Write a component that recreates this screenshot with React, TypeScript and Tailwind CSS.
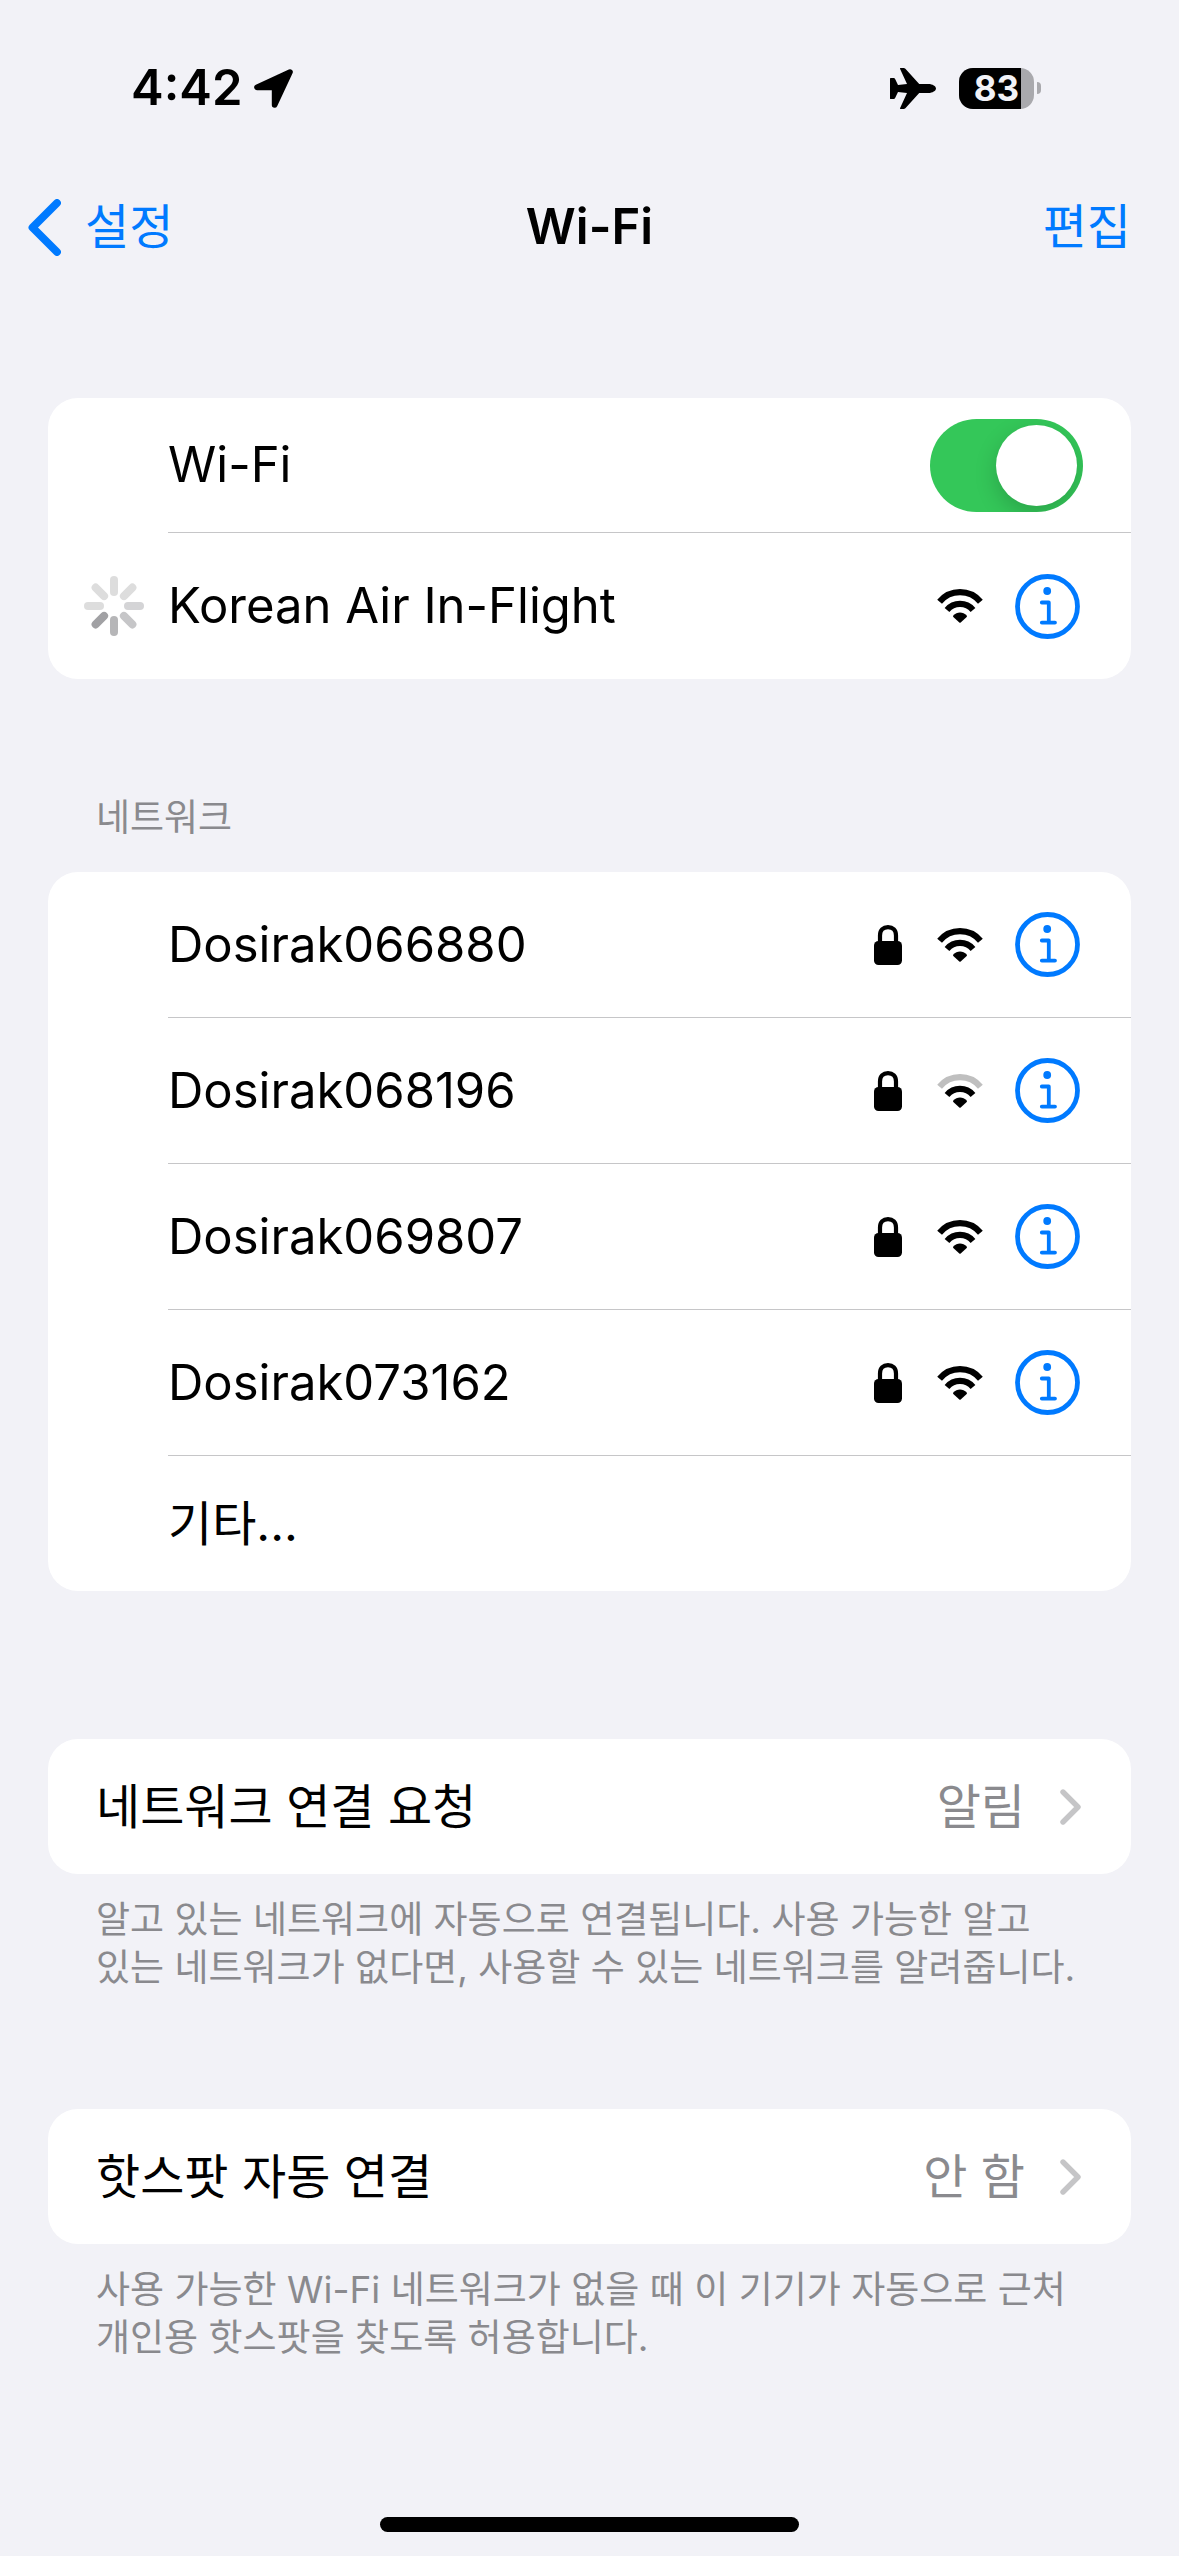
import { useState } from "react"
import clsx from "clsx"

type Network = {
  name: string
  locked?: boolean
  weak?: boolean
  connecting?: boolean
}

const CURRENT: Network = { name: "Korean Air In-Flight", connecting: true }

const NETWORKS: Network[] = [
  { name: "Dosirak066880", locked: true },
  { name: "Dosirak068196", locked: true, weak: true },
  { name: "Dosirak069807", locked: true },
  { name: "Dosirak073162", locked: true },
]

// Clockwise from the top
const SPINNER_COLORS = ["#dddddd", "#dddddd", "#d4d4d6", "#c6c6c8", "#b6b6b8", "#a1a1a4", "#dddddd", "#dddddd"]

function LocationIcon() {
  return (
    <svg width="39" height="39" viewBox="0 0 39 39" aria-hidden="true">
      <path d="M36 3 3 18.4h17.6V36z" fill="#000" stroke="#000" strokeWidth="5.6" strokeLinejoin="round" />
    </svg>
  )
}

function AirplaneIcon() {
  return (
    <svg width="46" height="41" viewBox="0 0 46 41" aria-hidden="true">
      <path d="M0 10.6Q0 10 .8 10H3.8Q4.6 10 5 10.7L8 17.1 17 16.1 10 .8Q9.7 0 10.6 0H13.6Q14.6 0 15.4.8L29.2 16H38.5C42.5 16 46 18.2 46 20.5S42.5 25 38.5 25H29.2L15.4 40.2Q14.6 41 13.6 41H10.6Q9.7 41 10 40.2L17 24.9 8 23.9 5 30.3Q4.6 31 3.8 31H.8Q0 31 0 30.4z" />
    </svg>
  )
}

function BatteryIcon() {
  return (
    <div className="flex items-center gap-[3px]" role="img" aria-label="83%">
      <div className="flex h-[41px] w-[75px] items-center overflow-hidden rounded-[14px] bg-[#a9a9ad]">
        <div className="flex h-full w-[62px] items-center justify-end bg-black pr-[2px] text-[35px] leading-none font-bold text-[#f2f2f7]">
          83
        </div>
      </div>
      <div className="h-3 w-1 rounded-r-full bg-[#a9a9ad]" />
    </div>
  )
}

function WifiIcon({ weak }: { weak?: boolean }) {
  return (
    <svg width="46" height="34" viewBox="0 0 46 34" fill="none" aria-hidden="true">
      <path d="M2.6 12.8A26.5 26.5 0 0 1 43.4 12.8" stroke={weak ? "#bfbfbf" : "#000"} strokeWidth="6.2" />
      <path d="M10 20.9A17 17 0 0 1 36 20.9" stroke="#000" strokeWidth="6.2" />
      <path d="M16.3 26.6C20 22.3 26 22.3 29.7 26.6Q30.3 27.3 29.7 27.9L23.7 33.4Q23 34 22.3 33.4L16.3 27.9Q15.7 27.3 16.3 26.6z" fill="#000" />
    </svg>
  )
}

function LockIcon() {
  return (
    <svg width="28" height="40" viewBox="0 0 28 40" aria-hidden="true">
      <path d="M6 18V10.5C6 5 9.2 2.2 14 2.2S22 5 22 10.5V18" fill="none" stroke="#000" strokeWidth="4.2" />
      <rect y="16" width="28" height="24" rx="4.5" />
    </svg>
  )
}

function InfoIcon() {
  return (
    <svg width="65" height="65" viewBox="0 0 65 65" fill="none" stroke="#007aff" aria-hidden="true">
      <circle cx="32.5" cy="32.5" r="30" strokeWidth="4.8" />
      <circle cx="32.2" cy="17" r="3.9" fill="#007aff" stroke="none" />
      <path d="M26.8 28.5H33.8V48.6M26.8 48.6H40" strokeWidth="3.8" strokeLinecap="round" strokeLinejoin="round" />
    </svg>
  )
}

function Spinner() {
  return (
    <svg width="60" height="60" viewBox="0 0 60 60" aria-hidden="true">
      {SPINNER_COLORS.map((color, i) => (
        <rect key={i} x="26" y="0" width="8" height="20" rx="4" fill={color} transform={`rotate(${i * 45} 30 30)`} />
      ))}
    </svg>
  )
}

function NetworkRow({ network, divider }: { network: Network; divider?: boolean }) {
  return (
    <div className="flex items-center">
      <div className="flex w-30 shrink-0 justify-center pl-3">{network.connecting && <Spinner />}</div>
      <div className={clsx("flex h-[146px] flex-1 items-center pr-[51px]", divider && "border-b border-[#c6c6c8]")}>
        <span className="flex-1 text-[49px]">{network.name}</span>
        {network.locked && <LockIcon />}
        <span className="mr-8 ml-[35px]">
          <WifiIcon weak={network.weak} />
        </span>
        <button type="button" aria-label={`${network.name} 정보`}>
          <InfoIcon />
        </button>
      </div>
    </div>
  )
}

function LinkCard({ label, value, note }: { label: string; value: string; note: string }) {
  return (
    <section>
      <a href="#" className="flex h-[135px] items-center rounded-[30px] bg-white pr-[50px] pl-12 text-[48px]">
        <span className="flex-1">{label}</span>
        <span className="text-[#8a8a8e]">{value}</span>
        <svg className="ml-[35px]" width="21" height="36" viewBox="0 0 21 36" fill="none" aria-hidden="true">
          <path d="M3 3 18 18 3 33" stroke="#c5c5c7" strokeWidth="5.4" strokeLinecap="round" strokeLinejoin="round" />
        </svg>
      </a>
      <p className="mt-[22px] px-12 text-[37px] leading-[48px] break-keep text-[#8a8a8e]">{note}</p>
    </section>
  )
}

export default function App() {
  const [wifiOn, setWifiOn] = useState(true)

  return (
    <div className="flex min-h-screen flex-col bg-[#f2f2f7] font-[Inter,'Noto_Sans_CJK_KR',sans-serif] leading-tight text-black">
      {/* Status bar */}
      <div className="flex h-44 items-center justify-between pr-[138px] pl-[131px]">
        <div className="flex items-center gap-3">
          <span className="text-[49px] font-semibold">4:42</span>
          <LocationIcon />
        </div>
        <div className="flex items-center gap-[23px]">
          <AirplaneIcon />
          <BatteryIcon />
        </div>
      </div>

      {/* Navigation */}
      <header className="grid h-[102px] grid-cols-3 items-center px-7 text-[48px]">
        <a href="#" className="flex items-center gap-6 text-[#007aff]">
          <svg width="33" height="57" viewBox="0 0 33 57" fill="none" aria-hidden="true">
            <path d="M29 4 4.5 28.5 29 53" stroke="#007aff" strokeWidth="7.8" strokeLinecap="round" strokeLinejoin="round" />
          </svg>
          설정
        </a>
        <h1 className="text-center text-[49px] font-semibold">Wi-Fi</h1>
        <button type="button" className="justify-self-end pr-5 text-[#007aff]">
          편집
        </button>
      </header>

      <main className="px-12 pt-[120px]">
        {/* Wi-Fi switch and current network */}
        <section className="rounded-[30px] bg-white">
          <div className="ml-30 flex h-[135px] items-center border-b border-[#c6c6c8] pr-12">
            <label htmlFor="wifi" className="flex-1 text-[49px]">
              Wi-Fi
            </label>
            <input
              id="wifi"
              type="checkbox"
              role="switch"
              checked={wifiOn}
              onChange={(e) => setWifiOn(e.target.checked)}
              className="h-[93px] w-[153px] appearance-none overflow-hidden rounded-full bg-[#e9e9ea] p-[6px] transition-colors before:block before:size-[81px] before:rounded-full before:bg-white before:shadow-[0_8px_22px_rgba(0,0,0,0.18)] checked:bg-[#34c759] checked:before:ml-[60px]"
            />
          </div>
          <NetworkRow network={CURRENT} />
        </section>

        {/* Available networks */}
        <h2 className="mt-[115px] mb-[30px] px-12 text-[37px] leading-[48px] text-[#8a8a8e]">네트워크</h2>
        <section className="rounded-[30px] bg-white">
          <ul>
            {NETWORKS.map((network) => (
              <li key={network.name}>
                <NetworkRow network={network} divider />
              </li>
            ))}
          </ul>
          <button type="button" className="flex h-[135px] w-full items-center pl-30 text-[48px]">
            기타...
          </button>
        </section>

        <div className="mt-[148px] flex flex-col gap-[117px]">
          <LinkCard
            label="네트워크 연결 요청"
            value="알림"
            note="알고 있는 네트워크에 자동으로 연결됩니다. 사용 가능한 알고 있는 네트워크가 없다면, 사용할 수 있는 네트워크를 알려줍니다."
          />
          <LinkCard
            label="핫스팟 자동 연결"
            value="안 함"
            note="사용 가능한 Wi-Fi 네트워크가 없을 때 이 기기가 자동으로 근처 개인용 핫스팟을 찾도록 허용합니다."
          />
        </div>
      </main>

      {/* Home indicator */}
      <div className="mt-auto flex justify-center pt-12 pb-6">
        <div className="h-[15px] w-[419px] rounded-full bg-black" />
      </div>
    </div>
  )
}
